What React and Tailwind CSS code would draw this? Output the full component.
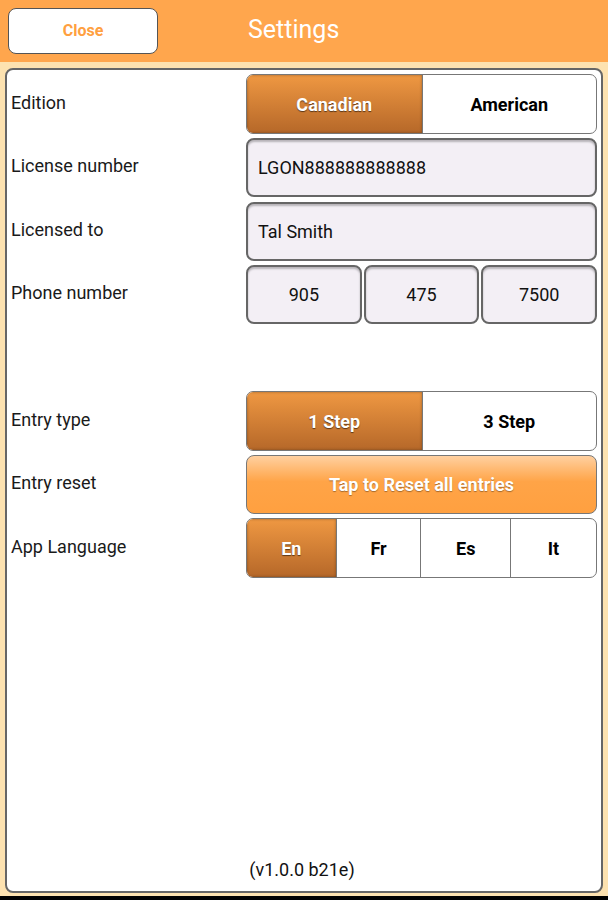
import React from "react";

const font = { fontFamily: "Roboto, 'Noto Sans', sans-serif" };

const Label = ({ children }) => (
  <div className="w-[239px] shrink-0 pb-[4px] pl-[4px] text-[18px] text-[#1a1a1a]">{children}</div>
);

const Segmented = ({ items, active, widths }) => (
  <div className="flex h-[60px] flex-1 overflow-hidden rounded-[7px] border border-[#777] bg-white">
    {items.map((item, i) => (
      <div
        key={item}
        className={
          "flex items-center justify-center text-[18px] font-bold " +
          (i > 0 ? "border-l border-[#777] " : "") +
          (i === active
            ? "bg-gradient-to-b from-[#ef9842] to-[#b66829] text-white [text-shadow:0_1px_1px_rgba(0,0,0,0.55)] shadow-[inset_0_0_3px_rgba(0,0,0,0.35)]"
            : "text-black")
        }
        style={{ width: widths[i] }}
      >
        {item}
      </div>
    ))}
  </div>
);

const Field = ({ children, className = "" }) => (
  <div
    className={
      "flex h-[59px] items-center rounded-[8px] border-2 border-[#666] bg-[#f3eff5] text-[18px] text-[#111] shadow-[inset_0_2px_2px_rgba(0,0,0,0.25)] " +
      className
    }
  >
    {children}
  </div>
);

export default function App() {
  return (
    <div className="flex h-[900px] w-[608px] flex-col bg-[#fde2b0]" style={font}>
      {/* Header */}
      <div className="relative flex h-[62px] shrink-0 items-center bg-[#ffa64d] px-[8px]">
        <div className="flex h-[46px] w-[150px] items-center justify-center rounded-[8px] border border-[#555] bg-white text-[16px] font-bold text-[#ffa040]">
          Close
        </div>
        <div className="absolute left-[248px] top-[11px] text-[25px] text-white">Settings</div>
      </div>

      {/* Panel */}
      <div className="mx-[5px] mt-[6px] flex flex-1 flex-col rounded-[8px] border-2 border-[#666] bg-white pr-[4px] pt-[4px] pb-[8px]">
        <div className="flex items-center">
          <Label>Edition</Label>
          <Segmented items={["Canadian", "American"]} active={0} widths={["50%", "50%"]} />
        </div>
        <div className="mt-[4px] flex items-center">
          <Label>License number</Label>
          <Field className="flex-1 pl-[10px]">LGON888888888888</Field>
        </div>
        <div className="mt-[5px] flex items-center">
          <Label>Licensed to</Label>
          <Field className="flex-1 pl-[10px]">Tal Smith</Field>
        </div>
        <div className="mt-[4px] flex items-center">
          <Label>Phone number</Label>
          <div className="flex flex-1 gap-[2px]">
            <Field className="flex-1 justify-center">905</Field>
            <Field className="flex-1 justify-center">475</Field>
            <Field className="flex-1 justify-center">7500</Field>
          </div>
        </div>

        <div className="mt-[67px] flex items-center">
          <Label>Entry type</Label>
          <Segmented items={["1 Step", "3 Step"]} active={0} widths={["50%", "50%"]} />
        </div>
        <div className="mt-[4px] flex items-center">
          <Label>Entry reset</Label>
          <div className="flex h-[59px] flex-1 items-center justify-center rounded-[8px] border border-[#777] bg-[linear-gradient(to_bottom,#ffd0a0_0%,#ffa447_45%,#ffa040_100%)] text-[18px] font-bold text-white [text-shadow:0_1px_1px_rgba(0,0,0,0.35)]">
            Tap to Reset all entries
          </div>
        </div>
        <div className="mt-[4px] flex items-center">
          <Label>App Language</Label>
          <Segmented
            items={["En", "Fr", "Es", "It"]}
            active={0}
            widths={["25.4%", "24.3%", "25.7%", "24.6%"]}
          />
        </div>

        <div className="flex-1" />
        <div className="text-center text-[18px] text-[#111]">(v1.0.0 b21e)</div>
      </div>
      <div className="mt-[3px] h-[4px] shrink-0 bg-black" />
    </div>
  );
}
